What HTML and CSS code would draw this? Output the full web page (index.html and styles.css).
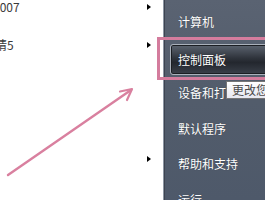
FILE: index.html
```html
<!DOCTYPE html>
<html lang="zh-CN">
<head>
<meta charset="utf-8">
<link rel="stylesheet" href="styles.css">
</head>
<body>
<div class="screen">
  <div class="left">
    <div class="row row1"><span class="ltext">2007</span><span class="tri"></span></div>
    <div class="row row2"><span class="ltext cut">请5</span><span class="tri"></span></div>
    <div class="row row3"><span class="ltext"></span><span class="tri"></span></div>
  </div>
  <div class="panel">
    <div class="item">计算机</div>
    <div class="item sel"><div class="selbox">控制面板</div></div>
    <div class="item">设备和打印机</div>
    <div class="item">默认程序</div>
    <div class="item">帮助和支持</div>
    <div class="item">运行...</div>
  </div>
</div>
<div class="tooltip">更改您的计算机设置</div>
<div class="hilite"></div>
<svg class="arrow" width="265" height="200" viewBox="0 0 265 200">
  <path d="M8 175 L131 90" stroke="#d9809f" stroke-width="2.4" stroke-linecap="round" fill="none"/>
  <path d="M120 91.5 L132 89 L127 100" stroke="#d9809f" stroke-width="2.2" stroke-linecap="round" stroke-linejoin="round" fill="none"/>
</svg>
</body>
</html>
```
FILE: styles.css
```css
html, body {
  margin: 0;
  padding: 0;
  background: #ffffff;
  overflow: hidden;
}
body {
  width: 265px;
  height: 200px;
  position: relative;
  font-family: "Noto Sans CJK SC", "Noto Sans", sans-serif;
}
.screen {
  display: flex;
  width: 265px;
  height: 200px;
}
.left {
  width: 163px;
  flex: none;
  display: flex;
  flex-direction: column;
  padding-right: 12px;
  box-sizing: border-box;
}
.row {
  height: 13px;
  display: flex;
  align-items: center;
  justify-content: space-between;
}
.row1 { margin-top: 0; }
.row2 { margin-top: 25px; }
.row3 { margin-top: 101px; }
.ltext {
  font-size: 12px;
  line-height: 13px;
  color: #3a3a3a;
  margin-left: -7px;
}
.ltext.cut { margin-left: -5px; }
.tri {
  width: 0;
  height: 0;
  border-left: 4px solid #000;
  border-top: 3px solid transparent;
  border-bottom: 3px solid transparent;
}
.panel {
  flex: 1;
  display: flex;
  flex-direction: column;
  padding-top: 4px;
  background: linear-gradient(180deg, #5a6372 0%, #525c6b 50%, #4e596a 100%);
  border-left: 1px solid #8c95a2;
  box-shadow: inset 1px 0 0 #3d4451;
  overflow: hidden;
}
.item {
  height: 35.5px;
  flex: none;
  display: flex;
  align-items: center;
  padding-left: 14px;
  font-size: 12px;
  color: #ffffff;
  white-space: nowrap;
  text-shadow: 0 0 1px rgba(0,0,0,0.4);
}
.item.sel {
  padding-left: 6px;
  align-items: flex-start;
}
.selbox {
  margin-top: 4px;
  height: 29px;
  width: 120px;
  flex: none;
  display: flex;
  align-items: center;
  padding-left: 7px;
  border: 1px solid #a9b0ba;
  border-radius: 3px;
  background: linear-gradient(180deg, #5c6470 0%, #2f343c 45%, #23272e 60%, #3a404a 100%);
  box-shadow: inset 0 0 0 1px #1b1e23;
}
.tooltip {
  position: absolute;
  left: 226px;
  top: 81px;
  height: 18px;
  width: 80px;
  box-sizing: border-box;
  padding-left: 5px;
  border: 1px solid #767676;
  background: linear-gradient(180deg, #ffffff 0%, #e6e7f0 100%);
  color: #4a4a4a;
  font-size: 12px;
  line-height: 16px;
  white-space: nowrap;
  overflow: hidden;
}
.hilite {
  position: absolute;
  left: 157px;
  top: 37px;
  width: 120px;
  height: 43px;
  box-sizing: border-box;
  border: 3.5px solid #d47c9d;
}
.arrow {
  position: absolute;
  left: 0;
  top: 0;
}
```
